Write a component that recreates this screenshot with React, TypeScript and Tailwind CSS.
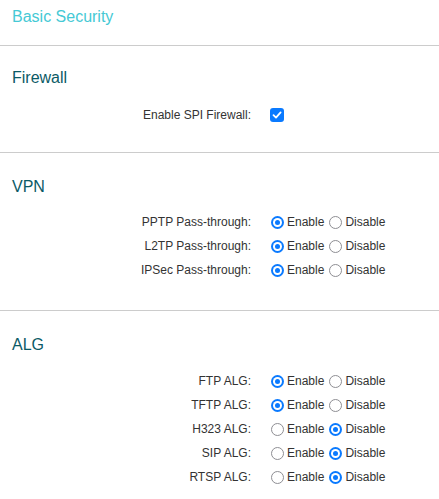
import React, { useState } from "react"

type Choice = "enable" | "disable"

interface Row {
  id: string
  label: string
  value: Choice
}

const vpnRows: Row[] = [
  { id: "pptp", label: "PPTP Pass-through:", value: "enable" },
  { id: "l2tp", label: "L2TP Pass-through:", value: "enable" },
  { id: "ipsec", label: "IPSec Pass-through:", value: "enable" },
]

const algRows: Row[] = [
  { id: "ftp", label: "FTP ALG:", value: "enable" },
  { id: "tftp", label: "TFTP ALG:", value: "enable" },
  { id: "h323", label: "H323 ALG:", value: "disable" },
  { id: "sip", label: "SIP ALG:", value: "disable" },
  { id: "rtsp", label: "RTSP ALG:", value: "disable" },
]

function Radio({ checked, onClick }: { checked: boolean; onClick: () => void }) {
  return (
    <span
      onClick={onClick}
      className={
        checked
          ? "w-[13px] h-[13px] rounded-full bg-[#0a7aff] flex items-center justify-center shrink-0 cursor-pointer"
          : "w-[13px] h-[13px] rounded-full border border-[#8e8e93] bg-white shrink-0 cursor-pointer"
      }
    >
      {checked && (
        <span className="w-[9px] h-[9px] rounded-full bg-white flex items-center justify-center">
          <span className="w-[5px] h-[5px] rounded-full bg-[#0a7aff]" />
        </span>
      )}
    </span>
  )
}

function RadioRow({ row }: { row: Row }) {
  const [value, setValue] = useState<Choice>(row.value)
  return (
    <div className="flex items-center h-6">
      <div className="w-[251px] text-right">{row.label}</div>
      <div className="flex items-center ml-5">
        <Radio checked={value === "enable"} onClick={() => setValue("enable")} />
        <span className="ml-[3px]">Enable</span>
        <span className="ml-[5px]" />
        <Radio checked={value === "disable"} onClick={() => setValue("disable")} />
        <span className="ml-[3px]">Disable</span>
      </div>
    </div>
  )
}

function Divider() {
  return <div className="h-px bg-[#cccccc]" />
}

function SectionTitle({ children }: { children: React.ReactNode }) {
  return <h2 className="px-3 text-[16px] leading-5 text-[#0b5a66]">{children}</h2>
}

export default function App() {
  const [spi, setSpi] = useState(true)

  return (
    <div
      className="w-[439px] h-[499px] bg-white text-[12px] text-[#333] overflow-hidden"
      style={{ fontFamily: '"Liberation Sans", Arial, sans-serif' }}
    >
      <div className="h-[45px] pt-[7px] px-3">
        <h1 className="text-[16px] leading-5 text-[#45c9d5]">Basic Security</h1>
      </div>
      <Divider />

      <div className="pt-[22px] pb-[25px]">
        <SectionTitle>Firewall</SectionTitle>
        <div className="flex items-center h-6 mt-[15px]">
          <div className="w-[251px] text-right">Enable SPI Firewall:</div>
          <span
            onClick={() => setSpi(!spi)}
            className={
              spi
                ? "ml-[19px] w-[14px] h-[14px] rounded-[3px] bg-[#0a7aff] flex items-center justify-center cursor-pointer"
                : "ml-[19px] w-[14px] h-[14px] rounded-[3px] border border-[#8e8e93] bg-white cursor-pointer"
            }
          >
            {spi && (
              <svg width="10" height="10" viewBox="0 0 10 10" fill="none">
                <path d="M1.5 5.2 L4 7.6 L8.6 2.4" stroke="white" strokeWidth="1.8" strokeLinecap="round" strokeLinejoin="round" />
              </svg>
            )}
          </span>
        </div>
      </div>
      <Divider />

      <div className="pt-[24px] pb-[28px]">
        <SectionTitle>VPN</SectionTitle>
        <div className="mt-[13px]">
          {vpnRows.map((r) => (
            <RadioRow key={r.id} row={r} />
          ))}
        </div>
      </div>
      <Divider />

      <div className="pt-[24px]">
        <SectionTitle>ALG</SectionTitle>
        <div className="mt-[14px]">
          {algRows.map((r) => (
            <RadioRow key={r.id} row={r} />
          ))}
        </div>
      </div>
    </div>
  )
}
